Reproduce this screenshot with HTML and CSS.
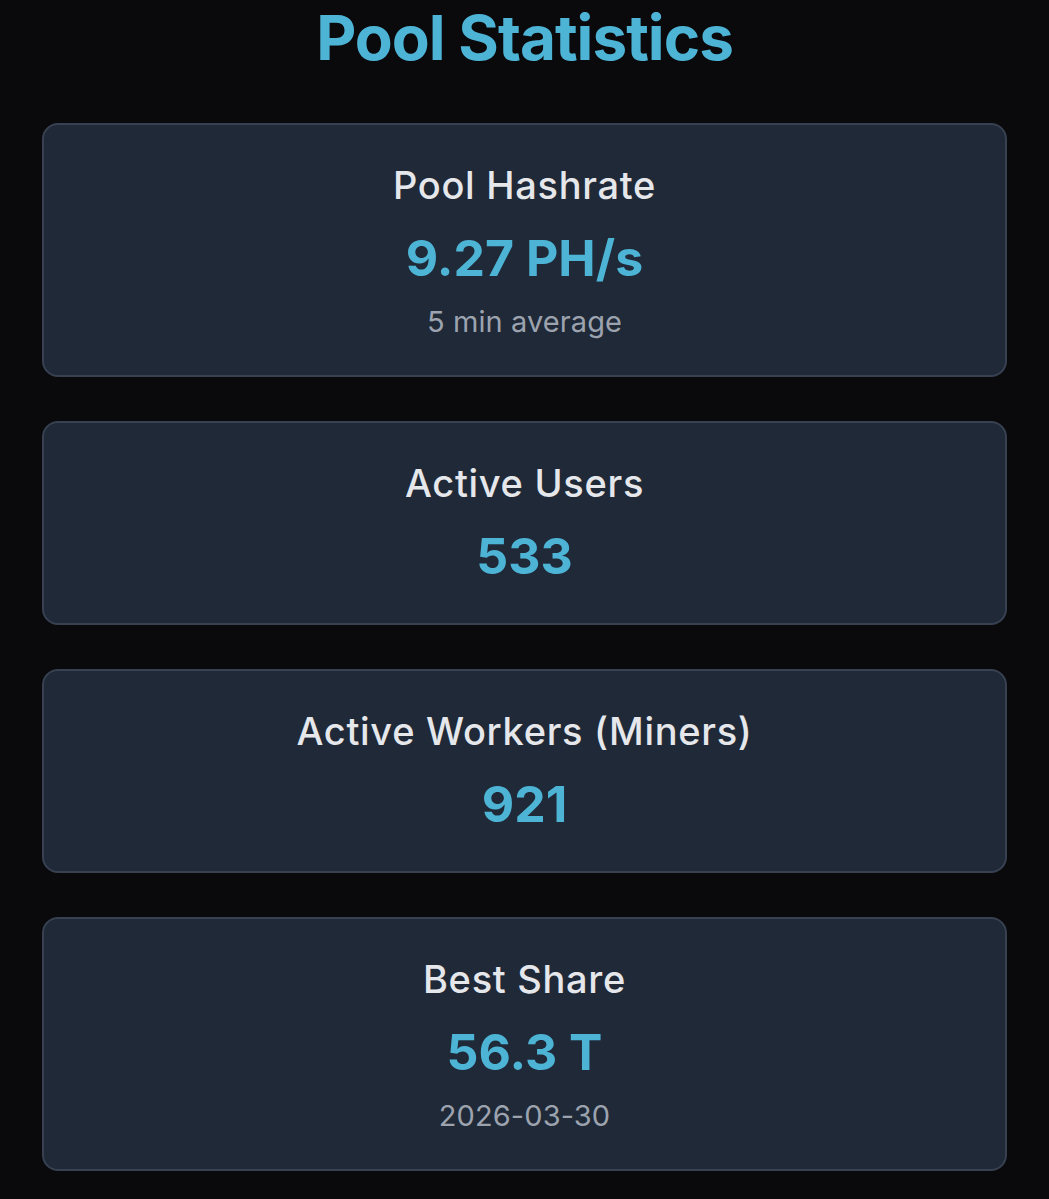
FILE: index.html
```html
<!DOCTYPE html>
<html lang="en">
<head>
<meta charset="utf-8">
<title>Pool Statistics</title>
<link rel="stylesheet" href="styles.css">
</head>
<body>
<main class="page">
  <h1 class="title">Pool Statistics</h1>
  <section class="stats">
    <div class="card">
      <div class="label">Pool Hashrate</div>
      <div class="value">9.27 PH/s</div>
      <div class="sub">5 min average</div>
    </div>
    <div class="card">
      <div class="label">Active Users</div>
      <div class="value">533</div>
    </div>
    <div class="card">
      <div class="label">Active Workers (Miners)</div>
      <div class="value">921</div>
    </div>
    <div class="card">
      <div class="label">Best Share</div>
      <div class="value">56.3 T</div>
      <div class="sub">2026-03-30</div>
    </div>
  </section>
</main>
</body>
</html>
```

FILE: styles.css
```css
html, body {
  margin: 0;
  padding: 0;
  background: #0a0a0d;
}
body {
  font-family: Inter, "Noto Sans", "Liberation Sans", sans-serif;
  color: #e5e7eb;
}
.page {
  padding: 0 42px;
}
.title {
  margin: 0;
  padding-top: 3px;
  height: 123px;
  box-sizing: border-box;
  text-align: center;
  font-size: 62px;
  line-height: 70px;
  font-weight: 700;
  color: #4db4d6;
  letter-spacing: -1px;
}
.stats {
  display: flex;
  flex-direction: column;
  gap: 44px;
}
.card {
  background: #1f2937;
  border: 2px solid #374151;
  border-radius: 16px;
  padding: 37px 20px;
  text-align: center;
}
.label {
  font-size: 38px;
  line-height: 46px;
  font-weight: 500;
  letter-spacing: 0.7px;
  color: #e5e7eb;
}
.value {
  margin-top: 20px;
  font-size: 50px;
  line-height: 60px;
  font-weight: 700;
  color: #4db4d6;
}
.sub {
  margin-top: 17px;
  font-size: 29px;
  line-height: 33px;
  letter-spacing: 0.1px;
  color: #9ca3af;
}
```
